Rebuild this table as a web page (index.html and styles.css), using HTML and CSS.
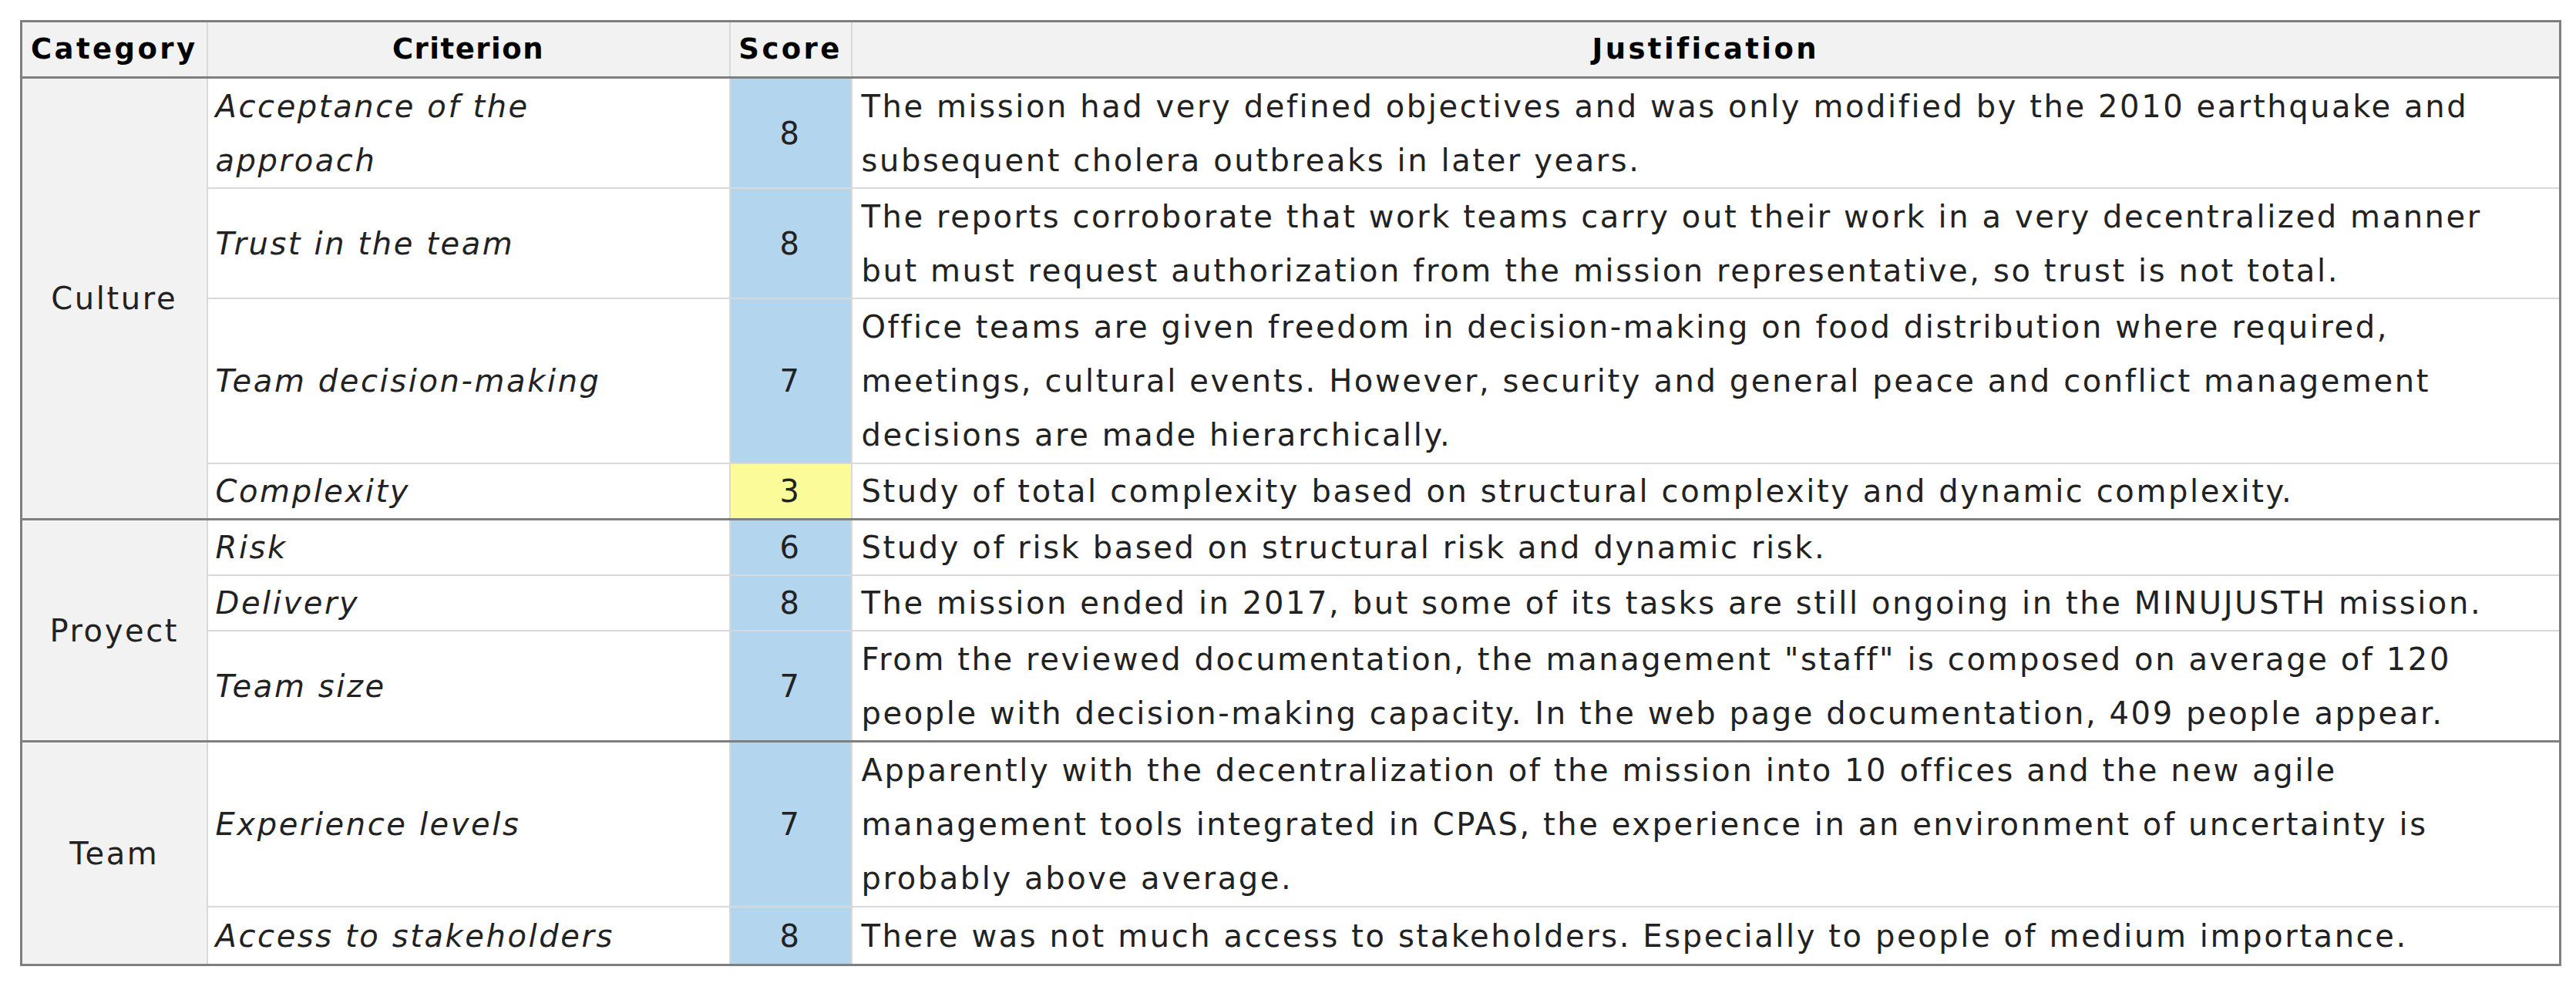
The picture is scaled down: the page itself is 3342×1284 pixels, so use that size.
FILE: index.html
```html
<!DOCTYPE html>
<html lang="en">
<head>
<meta charset="utf-8">
<title>Evaluation table</title>
<link rel="stylesheet" href="styles.css">
</head>
<body>
<div class="sheet">
<table class="grid">
  <colgroup>
    <col class="c-cat">
    <col class="c-crit">
    <col class="c-score">
    <col class="c-just">
  </colgroup>
  <thead>
    <tr class="r-head">
      <th>Category</th>
      <th class="h-crit">Criterion</th>
      <th>Score</th>
      <th>Justification</th>
    </tr>
  </thead>
  <tbody>
    <tr class="r2l">
      <td class="cat" rowspan="4">Culture</td>
      <td class="crit">Acceptance of the<br>approach</td>
      <td class="score">8</td>
      <td class="just">The mission had very defined objectives and was only modified by the 2010 earthquake and<br>subsequent cholera outbreaks in later years.</td>
    </tr>
    <tr class="r2l">
      <td class="crit">Trust in the team</td>
      <td class="score">8</td>
      <td class="just">The reports corroborate that work teams carry out their work in a very decentralized manner<br>but must request authorization from the mission representative, so trust is not total.</td>
    </tr>
    <tr class="r3l">
      <td class="crit">Team decision-making</td>
      <td class="score">7</td>
      <td class="just">Office teams are given freedom in decision-making on food distribution where required,<br>meetings, cultural events. However, security and general peace and conflict management<br>decisions are made hierarchically.</td>
    </tr>
    <tr class="r1l">
      <td class="crit">Complexity</td>
      <td class="score low">3</td>
      <td class="just">Study of total complexity based on structural complexity and dynamic complexity.</td>
    </tr>
    <tr class="r1l sec">
      <td class="cat" rowspan="3">Proyect</td>
      <td class="crit">Risk</td>
      <td class="score">6</td>
      <td class="just">Study of risk based on structural risk and dynamic risk.</td>
    </tr>
    <tr class="r1l">
      <td class="crit">Delivery</td>
      <td class="score">8</td>
      <td class="just">The mission ended in 2017, but some of its tasks are still ongoing in the MINUJUSTH mission.</td>
    </tr>
    <tr class="r2l">
      <td class="crit">Team size</td>
      <td class="score">7</td>
      <td class="just">From the reviewed documentation, the management "staff" is composed on average of 120<br>people with decision-making capacity. In the web page documentation, 409 people appear.</td>
    </tr>
    <tr class="r3l sec">
      <td class="cat" rowspan="2">Team</td>
      <td class="crit">Experience levels</td>
      <td class="score">7</td>
      <td class="just">Apparently with the decentralization of the mission into 10 offices and the new agile<br>management tools integrated in CPAS, the experience in an environment of uncertainty is<br>probably above average.</td>
    </tr>
    <tr class="r1l last">
      <td class="crit">Access to stakeholders</td>
      <td class="score">8</td>
      <td class="just">There was not much access to stakeholders. Especially to people of medium importance.</td>
    </tr>
  </tbody>
</table>
</div>
</body>
</html>
```

FILE: styles.css
```css
html, body {
  margin: 0;
  padding: 0;
  background: #ffffff;
}

.sheet {
  padding: 26px 0 0 26px;
}

.grid {
  border-collapse: collapse;
  table-layout: fixed;
  width: 3294px;
  border: 3px solid #7f7f7f;
  font-family: "DejaVu Sans", "Noto Sans", sans-serif;
  font-size: 40px;
  letter-spacing: 2.6px;
  color: #222222;
}

.c-cat { width: 241px; }
.c-crit { width: 678px; }
.c-score { width: 158px; }
.c-just { width: 2217px; }

.grid th,
.grid td {
  border: 2px solid #d9d9d9;
  padding: 0 10px;
  line-height: 70px;
  vertical-align: middle;
  white-space: nowrap;
  overflow: hidden;
}

.grid th {
  background: #f2f2f2;
  font-weight: bold;
  font-size: 37px;
  letter-spacing: 3.4px;
  color: #000000;
  text-align: center;
  border-bottom: 3px solid #7f7f7f;
  height: 70px;
}

.grid th.h-crit {
  letter-spacing: 1.5px;
}

.grid .cat {
  background: #f2f2f2;
  text-align: center;
  padding: 0;
}

.grid .crit {
  font-style: italic;
}

.grid .score {
  background: #b4d5ee;
  text-align: center;
  padding: 0;
}

.grid .score.low {
  background: #fbfb9a;
}

.grid .just {
  padding: 0 12px;
}

.r1l td { height: 70px; }
.r2l td { height: 141px; }
.r3l td { height: 212px; }
.grid tr.last td { height: 73px; }

.grid tr.sec td {
  border-top: 3px solid #7f7f7f;
}
```
